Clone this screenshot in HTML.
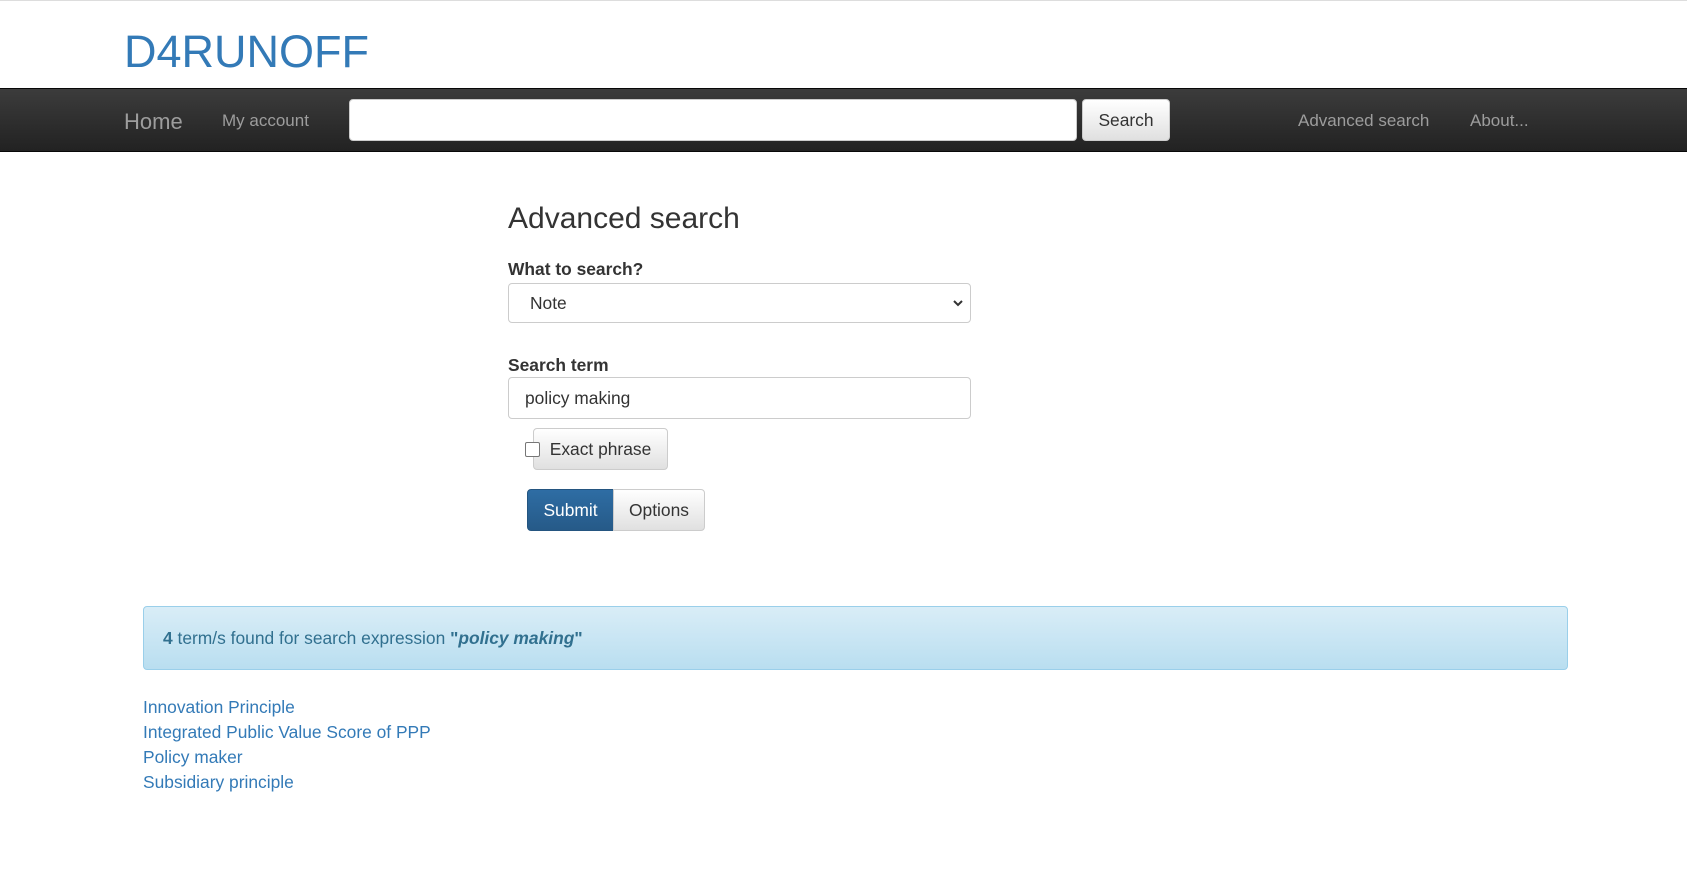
<!DOCTYPE html>
<html><head><meta charset="utf-8"><style>
body{margin:0;width:1687px;height:880px;background:#fff;font-family:"Liberation Sans",sans-serif;font-size:17.4px;color:#333;position:relative;overflow:hidden}
.abs{position:absolute}
.top{top:0;left:0;width:1687px;height:1px;background:#ddd}
.title{left:124px;top:25px;font-size:45px;color:#337ab7;line-height:54px}
.nav{left:0;top:88px;width:1687px;height:64px;background:linear-gradient(#3c3c3c,#222);border-top:1px solid #080808;border-bottom:1px solid #080808;box-sizing:border-box}
.nl{color:#9d9d9d;line-height:20px;font-size:17px}
.inp{background:#fff;border:1px solid #ccc;border-radius:4px;box-sizing:border-box}
.btn{background:linear-gradient(#fff,#e0e0e0);border:1px solid #ccc;border-radius:4px;box-sizing:border-box;text-align:center;color:#333}
.lbl{font-weight:bold;left:508px}
a{color:#337ab7;text-decoration:none}
</style></head><body>
<div class="abs top"></div>
<div class="abs title">D4RUNOFF</div>
<div class="abs nav"></div>
<div class="abs nl" style="left:124px;top:110px;font-size:22px;line-height:24px">Home</div>
<div class="abs nl" style="left:222px;top:111px">My account</div>
<div class="abs inp" style="left:349px;top:99px;width:728px;height:42px"></div>
<div class="abs btn" style="left:1082px;top:99px;width:88px;height:42px;line-height:41px">Search</div>
<div class="abs nl" style="left:1298px;top:111px">Advanced search</div>
<div class="abs nl" style="left:1470px;top:111px">About...</div>

<div class="abs" style="left:508px;top:201px;font-size:30px;line-height:36px">Advanced search</div>
<div class="abs lbl" style="top:259px">What to search?</div>
<div class="abs inp" style="left:508px;top:283px;width:463px;height:40px;line-height:39px;padding-left:21px">Note
<svg style="position:absolute;right:6px;top:15px" width="12" height="9" viewBox="0 0 12 9"><path d="M2 2l4 4 4-4" fill="none" stroke="#333" stroke-width="2"/></svg></div>
<div class="abs lbl" style="top:355px">Search term</div>
<div class="abs inp" style="left:508px;top:377px;width:463px;height:42px;line-height:41px;padding-left:16px">policy making</div>
<div class="abs btn" style="left:533px;top:428px;width:135px;height:42px;line-height:41px;padding-left:0">Exact phrase</div>
<div class="abs" style="left:525px;top:442px;width:13px;height:13px;border:1px solid #767676;border-radius:2px;background:#fff"></div>
<div class="abs" style="left:527px;top:489px;width:87px;height:42px;background:linear-gradient(#2e6da4,#265a88);border:1px solid #245580;border-radius:4px 0 0 4px;box-sizing:border-box;color:#fff;text-align:center;line-height:40px">Submit</div>
<div class="abs btn" style="left:613px;top:489px;width:92px;height:42px;line-height:40px;border-radius:0 4px 4px 0">Options</div>

<div class="abs" style="left:143px;top:606px;width:1425px;height:64px;background:linear-gradient(#d9edf7,#b9def0);border:1px solid #9acfea;border-radius:4px;box-sizing:border-box;color:#31708f;line-height:63px;padding-left:19px"><b>4</b> term/s found for search expression <b>"<i>policy making</i>"</b></div>

<div class="abs" style="left:143px;top:695px;line-height:25px">
<a>Innovation Principle</a><br><a>Integrated Public Value Score of PPP</a><br><a>Policy maker</a><br><a>Subsidiary principle</a></div>
</body></html>
